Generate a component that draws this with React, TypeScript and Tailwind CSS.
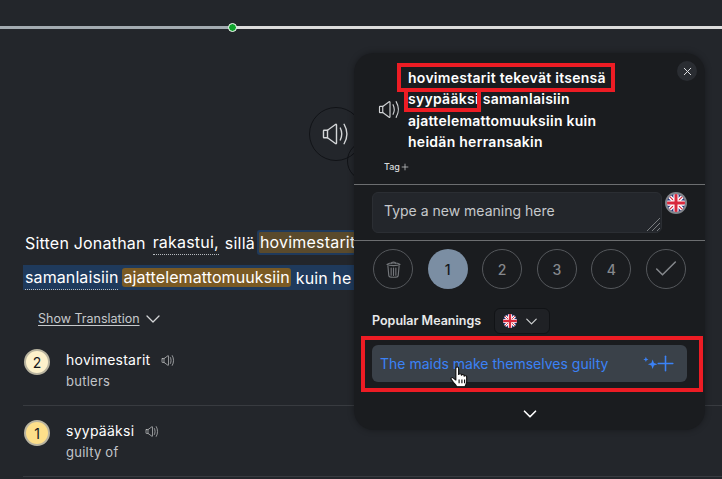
import { Check, ChevronDown, Plus, X } from "lucide-react";

function Speaker({ className }: { className: string }) {
  return (
    <svg viewBox="0 0 26 24" fill="none" stroke="currentColor" strokeWidth="1.3" strokeLinecap="round" strokeLinejoin="round" className={className}>
      <path d="M1.5 8.5h3.2L12 3.2c.6-.4 1-.1 1 .5v16.6c0 .6-.4.9-1 .5l-7.300-5.300H1.500c-.4 0-.5-.2-.5-.5V9c0-.3.1-.5.5-.5z" />
      <path d="M4.700 8.500v7" />
      <path d="M16.500 6.500c1.700 3.500 1.700 7.500 0 11" />
      <path d="M20 3c3.200 5.500 3.200 12.500 0 18" />
    </svg>
  );
}

function UkFlag({ className }: { className: string }) {
  return (
    <svg viewBox="0 0 24 24" className={className}>
      <clipPath id="flag-clip">
        <circle cx="12" cy="12" r="12" />
      </clipPath>
      <g clipPath="url(#flag-clip)">
        <rect width="24" height="24" fill="#26347c" />
        <path d="M0 0L24 24M24 0L0 24" stroke="#fff" strokeWidth="5" />
        <path d="M0 0L24 24M24 0L0 24" stroke="#d8283c" strokeWidth="1.600" />
        <path d="M12 0V24M0 12H24" stroke="#fff" strokeWidth="7" />
        <path d="M12 0V24M0 12H24" stroke="#d8283c" strokeWidth="4" />
      </g>
    </svg>
  );
}

function Sparkles() {
  return (
    <svg viewBox="0 0 14 14" fill="#3b82f6" className="h-[15px] w-[15px]">
      <path d="M9 3.200l1.200 3.300 3.300 1.200-3.300 1.200L9 12.200 7.800 8.900 4.500 7.700l3.300-1.200z" />
      <path d="M2.700.800l.7 1.700 1.700.7-1.700.7-.7 1.700-.7-1.700-1.700-.7L2 2.500z" />
    </svg>
  );
}

function Trash() {
  return (
    <svg viewBox="0 0 16 18" fill="none" stroke="#74777b" strokeWidth="1.200" strokeLinecap="round" strokeLinejoin="round" className="h-[17px] w-[15px]">
      <path d="M1 3.500c1.500-1 3.600-1.400 7-1.400s5.500.4 7 1.400c-1.500 1-3.600 1.300-7 1.300s-5.500-.3-7-1.300z" />
      <path d="M5.800 2.200c0-1.600 4.400-1.600 4.400 0" />
      <path d="M2 5l1 10.500c.1 1.200 2 1.800 5 1.800s4.900-.6 5-1.800L14 5" />
      <path d="M5.500 7.500v7.500M8 7.500v7.800M10.500 7.500v7.500" />
    </svg>
  );
}

function Hand() {
  return (
    <svg viewBox="0 0 18 24" preserveAspectRatio="none" className="h-[23px] w-[21px]" fill="#fff" stroke="#111" strokeWidth="1" strokeLinejoin="round">
      <path d="M5 2c0-1.400 2.400-1.400 2.400 0v7c.3-1.400 2.400-1.300 2.400.2v.6c.3-1.300 2.300-1.200 2.300.3v.7c.4-1.100 2.200-1 2.200.5v5.200c0 2-1 3-1.300 5H5.600c-.4-1.700-1.500-2.600-2.600-4.300L1 13.800c-.7-1.300 1-2.300 2-1.200l2 2.100z" />
      <path d="M7.800 14v4M10.200 14v4M12.500 14v4" fill="none" />
    </svg>
  );
}

function WordRow({ count, word, meaning, badge }: { count: number; word: string; meaning: string; badge: string }) {
  return (
    <div className="flex h-[71px] items-start gap-[16px] border-b border-[#383b40] pl-[1px] pt-[15px]">
      <div className={`mt-[-1px] flex h-[26px] w-[26px] items-center justify-center rounded-full border-2 border-[#b9b4a0] text-[14px] text-[#15181c] ${badge}`}>
        {count}
      </div>
      <div>
        <div className="flex items-center gap-[11px] text-[14px] leading-[20px] tracking-[0.25px] text-white">
          {word}
          <Speaker className="h-[13px] w-[15px] text-[#c4c6c8]" />
        </div>
        <div className="mt-[1px] text-[13px] leading-[20px] tracking-[0.25px] text-[#c2c5c9]">{meaning}</div>
      </div>
    </div>
  );
}

function ScoreButton({ label, active }: { label: string; active?: boolean }) {
  return (
    <div className={`flex h-[40px] w-[40px] items-center justify-center rounded-full text-[14px] font-medium ${active ? "bg-[#7b8ea3] text-[#15181c]" : "border border-[#55585c] text-[#85888c]"}`}>
      {label}
    </div>
  );
}

export default function App() {
  return (
    <div className="relative h-[479px] w-[722px] overflow-hidden bg-[#23262b] font-['Inter','Noto_Sans',sans-serif] text-white">
      {/* Progress bar */}
      <div className="relative mt-[26px] flex h-[3px]">
        <div className="w-[232px] bg-[#a3abb1]" />
        <div className="flex-1 bg-[#dcdcdc]" />
        <div className="absolute left-[228px] top-[-3px] h-[9px] w-[9px] rounded-full border border-white bg-[#0fa32c]" />
      </div>

      {/* Audio buttons */}
      <div className="relative ml-[309px] mt-[78px] flex h-[54px] w-[54px] items-center justify-center rounded-full border border-[#111317]">
        <Speaker className="h-[26px] w-[29px] text-[#d4d6d8]" />
        <div className="absolute left-[37px] top-[33px] h-[40px] w-[40px] rounded-full border border-[#111317]" />
      </div>

      {/* Sentence */}
      <div className="ml-[23px] mt-[69px] flex h-[25px] w-[335px] items-center whitespace-nowrap pl-[2px] text-[16px] tracking-[0.2px] text-white">
        <span>Sitten Jonathan</span>
        <span className="ml-[7px] border-b border-dotted border-[#b8bcc0] leading-[24px]">rakastui,</span>
        <span className="ml-[6px]">sillä</span>
        <span className="ml-[2px] rounded-[3px] border-y-2 border-l-2 border-[#1f3a5c] bg-[#5a4a2c] px-[1px] leading-[21px]">hovimestarit</span>
      </div>
      <div className="ml-[23px] mt-[10px] flex h-[25px] w-[335px] items-center overflow-hidden whitespace-nowrap bg-[#1f3a5c] pl-[2px] text-[16px] tracking-[0.1px] text-white">
        <span className="border-b border-dotted border-[#b8bcc0] leading-[24px]">samanlaisiin</span>
        <span className="ml-[4px] rounded-[3px] bg-[#7a5a24] px-[1px] leading-[19px]">ajattelemattomuuksiin</span>
        <span className="ml-[5px]">kuin he</span>
      </div>

      <div className="ml-[38px] mt-[20px] flex h-[18px] items-center gap-[1px]">
        <span className="text-[12.500px] text-[#c6c9cc] underline underline-offset-2">Show Translation</span>
        <ChevronDown className="h-[24px] w-[24px] text-[#d4d6d8]" strokeWidth={1.300} />
      </div>

      <div className="ml-[23px] mt-[7px]">
        <WordRow count={2} word="hovimestarit" meaning="butlers" badge="bg-[#fdf1cb]" />
        <WordRow count={1} word="syypääksi" meaning="guilty of" badge="bg-[#fddf8a]" />
      </div>

      {/* Meaning popup */}
      <div className="absolute left-[354px] top-[53px] h-[377px] w-[351px] rounded-[20px] bg-[#1a1c1f] shadow-[0_0_6px_rgba(0,0,0,0.35)]">
        <div className="relative h-[132px] border-b border-[#6c6e70]">
          <button className="absolute right-[8px] top-[8px] flex h-[20px] w-[20px] items-center justify-center rounded-full bg-[#2a2d32]">
            <X className="h-[13px] w-[13px] text-[#e0e2e4]" strokeWidth={1.800} />
          </button>
          <div className="flex items-center pl-[24px] pt-[14px]">
            <Speaker className="h-[21px] w-[24px] text-[#d0d2d4]" />
            <div className="ml-[6px] w-[225px] text-[14px] font-semibold leading-[21.300px] tracking-[0.27px] text-white">
              hovimestarit tekevät itsensä syypääksi samanlaisiin ajattelemattomuuksiin kuin heidän herransakin
            </div>
          </div>
          <div className="ml-[30px] mt-[8px] flex items-center text-[9px] font-medium text-[#d8dadc]">
            Tag
            <Plus className="h-[10px] w-[10px] text-[#c8cacc]" strokeWidth={1.800} />
          </div>
        </div>

        <div className="flex h-[56px] gap-[3px] border-b border-[#6c6e70] pl-[18px] pt-[7px]">
          <div className="relative h-[41px] w-[290px] rounded-[6px] border border-[#2b2e33] bg-[#23262b] pl-[11px] pt-[8px] text-[14px] leading-[20px] text-[#c6c9cc]">
            Type a new meaning here
            <svg viewBox="0 0 14 14" className="absolute bottom-[1px] right-[1px] h-[14px] w-[14px]" stroke="#7a7d80" strokeWidth="1">
              <path d="M1 14L14 1M6 14L14 6M11 14L14 11" />
            </svg>
          </div>
          <div className="h-[22px] w-[22px] rounded-full bg-[#81858b] p-[2px]">
            <UkFlag className="h-[18px] w-[18px]" />
          </div>
        </div>

        <div className="flex justify-between px-[19px] pt-[8px]">
          <div className="flex h-[40px] w-[40px] items-center justify-center rounded-full border border-[#55585c]">
            <Trash />
          </div>
          <ScoreButton label="1" active />
          <ScoreButton label="2" />
          <ScoreButton label="3" />
          <ScoreButton label="4" />
          <div className="flex h-[40px] w-[40px] items-center justify-center rounded-full border border-[#55585c]">
            <Check className="h-[28px] w-[28px] text-[#85888c]" strokeWidth={1.300} />
          </div>
        </div>

        <div className="ml-[18px] mt-[19px] flex h-[26px] items-center">
          <span className="text-[12.500px] font-semibold text-[#e8e9ea]">Popular Meanings</span>
          <div className="ml-[13px] flex h-[26px] w-[56px] items-center justify-center gap-[5px] rounded-[6px] border border-[#111316] bg-[#1f2125]">
            <UkFlag className="h-[14px] w-[14px]" />
            <ChevronDown className="h-[19px] w-[19px] text-[#d0d2d4]" strokeWidth={1.500} />
          </div>
        </div>

        <div className="ml-[18px] mt-[11px] flex h-[37px] w-[315px] items-center justify-between rounded-[6px] bg-[#3a4149] pl-[8px] pr-[14px] text-[14px] text-[#3b82f6]">
          The maids make themselves guilty
          <div className="flex items-center">
            <Sparkles />
            <Plus className="-mx-[5px] h-[25px] w-[25px]" strokeWidth={1.500} />
          </div>
        </div>

        <div className="mt-[21px] flex justify-center">
          <ChevronDown className="h-[22px] w-[22px] text-white" strokeWidth={1.800} />
        </div>

        {/* Annotation boxes */}
        <div className="absolute left-[43px] top-[10px] h-[29px] w-[218px] border-4 border-[#ed1c24]" />
        <div className="absolute left-[50px] top-[38px] h-[21px] w-[77px] border-x-4 border-b-4 border-[#ed1c24]" />
        <div className="absolute left-[7px] top-[283px] h-[56px] w-[342px] border-4 border-[#ed1c24]" />
        <div className="absolute left-[96px] top-[313px]">
          <Hand />
        </div>
      </div>
    </div>
  );
}
